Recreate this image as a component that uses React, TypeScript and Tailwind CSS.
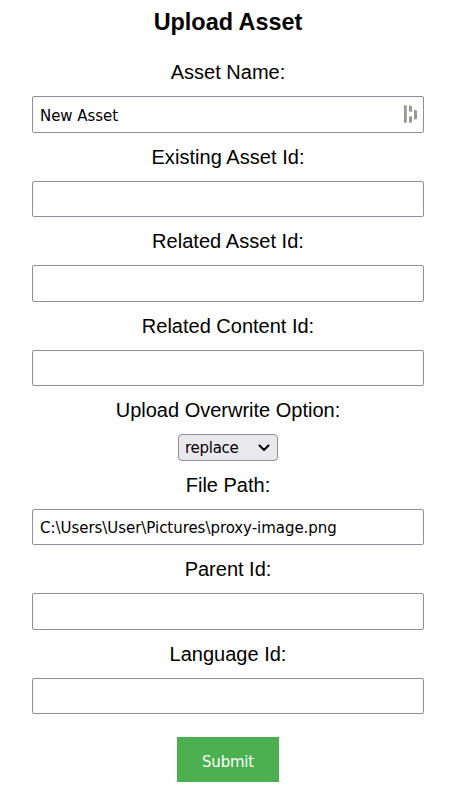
import React from "react";

const label = "block text-center text-[20px] leading-[24px] whitespace-nowrap";
const control = "font-['DejaVu_Sans_Condensed','DejaVu_Sans',sans-serif] [font-stretch:condensed] text-[16.67px]";

function Field({ id, text, value = "", gap, height, adorned = false, tracking = "" }: { id: string; text: string; value?: string; gap: string; height: string; adorned?: boolean; tracking?: string }) {
  return (
    <div className={`flex flex-col ${gap}`}>
      <label htmlFor={id} className={`${label} ${tracking}`}>{text}</label>
      <div className={`mt-3 flex w-full items-center justify-between rounded-[2px] border border-[#8f8f9d] bg-white pl-[7px] pr-[5px] ${height}`}>
        <input id={id} defaultValue={value} className={`min-w-0 flex-1 bg-transparent pt-px ${control} tracking-[-0.03px] text-black outline-none`} />
        {adorned && (
          <svg className="-mt-px" width="15" height="20" viewBox="0 0 15 20" fill="#9b9893">
            <path d="M1 1l2.800.5v17L1 19zM6 1.300l3 .9V8L6 7.200zM6 12.800l3-.8v6l-3 .9zM11 5.600l3 1.100v8L11 15.800z" />
          </svg>
        )}
      </div>
    </div>
  );
}

export default function App() {
  return (
    <main className="h-[797px] w-[469px] bg-white pl-8 pr-[45px] pt-2 font-['Liberation_Sans',Arial,sans-serif] text-black">
      <form className="flex flex-col" onSubmit={(e) => e.preventDefault()}>
        <h2 className="text-center text-[23.400px] font-bold leading-[28px]">Upload Asset</h2>
        <Field id="name" text="Asset Name:" value="New Asset" gap="mt-6" height="h-[37px]" adorned />
        <Field id="existing" text="Existing Asset Id:" gap="mt-3" height="h-[36px]" tracking="tracking-[0.04px]" />
        <Field id="related" text="Related Asset Id:" gap="mt-3" height="h-[37px]" tracking="tracking-[0.04px]" />
        <Field id="content" text="Related Content Id:" gap="mt-3" height="h-[36px]" />
        <div className="mt-3 flex flex-col items-center">
          <label htmlFor="overwrite" className={label}>Upload Overwrite Option:</label>
          <button id="overwrite" type="button" className={`mt-3 flex h-[27px] w-[100px] items-center justify-between rounded-[4px] border border-[#8f8f9d] bg-[#e9e9ed] pl-[6px] pr-[6px] ${control} tracking-[-0.25px]`}>
            <span className="-mt-px">replace</span>
            <svg width="14" height="10" viewBox="0 0 14 10" fill="none" stroke="black" strokeWidth="2" strokeLinecap="round" strokeLinejoin="round"><path d="M2.500 2.500 7 7l4.500-4.500" /></svg>
          </button>
        </div>
        <Field id="path" text="File Path:" value="C:\Users\User\Pictures\proxy-image.png" gap="mt-3" height="h-[36px]" />
        <Field id="parent" text="Parent Id:" gap="mt-3" height="h-[37px]" />
        <Field id="language" text="Language Id:" gap="mt-3" height="h-[36px]" />
        <button type="submit" className={`mt-[23px] h-[45px] w-[102px] self-center bg-[#4caf50] pt-[3px] ${control} tracking-[-0.2px] text-white`}>Submit</button>
      </form>
    </main>
  );
}
